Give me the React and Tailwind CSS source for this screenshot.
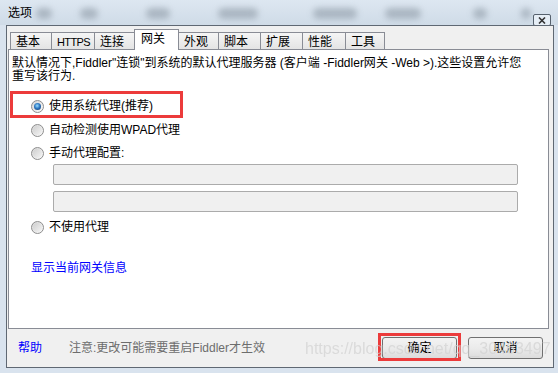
import React from 'react';

const font = { fontFamily: '"Liberation Sans", "Noto Sans CJK SC", sans-serif' };

const tabs = [
  { label: '基本', w: 'w-[42px]' },
  { label: 'HTTPS', w: 'w-[44px] tracking-[-0.6px] text-[11px]' },
  { label: '连接', w: 'w-[41px]' },
  { label: '网关', w: 'w-[45px]', active: true },
  { label: '外观', w: 'w-[41px]' },
  { label: '脚本', w: 'w-[43px]' },
  { label: '扩展', w: 'w-[43px]' },
  { label: '性能', w: 'w-[44px]' },
  { label: '工具', w: 'w-[40px]' },
];

const blobs = [
  'left-[36px] w-[16px]',
  'left-[80px] w-[18px]',
  'left-[146px] w-[24px]',
  'left-[218px] w-[40px]',
  'left-[313px] w-[44px]',
  'left-[385px] w-[36px]',
  'left-[473px] w-[14px]',
  'left-[521px] w-[10px]',
];

const Radio = ({ checked }) => (
  <span className="w-[13px] h-[13px] rounded-full border border-[#8d8d8d] bg-gradient-to-br from-[#d6d6d6] to-[#fbfbfb] flex items-center justify-center shrink-0">
    {checked ? (
      <span className="w-[7px] h-[7px] rounded-full bg-[radial-gradient(circle_at_45%_40%,#9be0ff_0%,#2f79c4_45%,#0f2f5a_100%)]" />
    ) : (
      <span className="w-[9px] h-[9px] rounded-full bg-gradient-to-br from-[#cfcfcf] to-[#f4f4f4]" />
    )}
  </span>
);

const WinButton = ({ children }) => (
  <button className="w-[75px] h-[22px] rounded-[3px] border border-[#707070] bg-gradient-to-b from-[#f3f3f3] via-[#ebebeb] to-[#dcdcdc] text-[12px] text-black flex items-center justify-center">
    {children}
  </button>
);

export default function App() {
  return (
    <div style={font} className="w-[558px] h-[373px] bg-[#d9e3ee] flex flex-col overflow-hidden text-[12px] text-black">
      {/* title bar */}
      <div className="relative h-[25px] shrink-0 bg-gradient-to-b from-[#dde7f1] to-[#cfdbe7]">
        {blobs.map((b, i) => (
          <span key={i} className={`absolute top-[8px] h-[11px] rounded-full bg-[#8e9aa6] opacity-60 blur-[3px] ${b}`} />
        ))}
        <span className="absolute left-[8px] top-[5px] leading-[16px] text-[12px]">选项</span>
        <span className="absolute left-[533px] top-[14px] w-[18px] h-[12px] rounded-[2px] border border-[#56616d] bg-[#e6eef6] flex items-center justify-center">
          <svg width="8" height="7" viewBox="0 0 8 7">
            <path d="M1 0.5 L7 6.5 M7 0.5 L1 6.5" stroke="#333" strokeWidth="1.6" />
          </svg>
        </span>
      </div>

      {/* client area */}
      <div className="ml-[6px] mr-[4px] mb-[5px] flex-1 flex flex-col border border-[#5f6873] bg-[#f0f0f0] relative">
        {/* tab strip */}
        <div className="h-[22px] flex items-end pl-[3px] mt-[1px]">
          {tabs.map((t) =>
            t.active ? (
              <div
                key={t.label}
                className={`${t.w} h-[21px] -mb-px relative z-10 bg-white border border-b-0 border-[#898c95] pl-[6px] pt-[2px] leading-[14px] -ml-px`}
              >
                {t.label}
              </div>
            ) : (
              <div
                key={t.label}
                className={`${t.w} h-[17px] whitespace-nowrap overflow-hidden bg-gradient-to-b from-[#f5f5f5] to-[#e4e4e4] border border-b-0 border-[#898c95] pl-[5px] pt-[2px] leading-[14px] -ml-px first:ml-0`}
              >
                {t.label}
              </div>
            )
          )}
        </div>

        {/* panel */}
        <div className="ml-px mr-[4px] h-[280px] bg-white border border-[#898c95] flex flex-col relative">
          <div className="pl-[3px] pt-[7px] leading-[13px] whitespace-nowrap">
            默认情况下,Fiddler&quot;连锁&quot;到系统的默认代理服务器 (客户端 -Fiddler网关 -Web &gt;).这些设置允许您
            <br />
            重写该行为.
          </div>

          <div className="relative mt-[12px] h-[22px] flex items-center pl-[22px]">
            <Radio checked />
            <span className="ml-[5px]">使用系统代理(推荐)</span>
            <span className="absolute left-[1px] top-[-4px] w-[173px] h-[27px] border-[3px] border-[#ec3b3b]" />
          </div>

          <div className="mt-[2px] h-[22px] flex items-center pl-[22px]">
            <Radio />
            <span className="ml-[5px]">自动检测使用WPAD代理</span>
          </div>

          <div className="mt-[1px] h-[22px] flex items-center pl-[22px]">
            <Radio />
            <span className="ml-[5px]">手动代理配置:</span>
          </div>

          <div className="ml-[44px] w-[465px] flex flex-col gap-[6px]">
            <div className="h-[21px] rounded-[2px] border border-[#ababab] bg-[#f0f0f0]" />
            <div className="h-[21px] rounded-[2px] border border-[#ababab] bg-[#f0f0f0]" />
          </div>

          <div className="mt-[4px] h-[22px] flex items-center pl-[22px]">
            <Radio />
            <span className="ml-[5px]">不使用代理</span>
          </div>

          <div className="mt-[22px] pl-[22px] leading-[16px] text-[#0000ff]">显示当前网关信息</div>
        </div>

        {/* footer */}
        <div className="flex-1 flex items-center relative">
          <span className="ml-[11px] text-[#0000ff]">帮助</span>
          <span className="ml-[27px] text-[#6d6d6d]">注意:更改可能需要重启Fiddler才生效</span>
          <div className="ml-auto mr-[10px] flex gap-[11px]">
            <div className="relative">
              <WinButton>确定</WinButton>
              <span className="absolute -left-[4px] -top-[4px] w-[83px] h-[28px] border-[3px] border-[#ec3b3b]" />
            </div>
            <WinButton>取消</WinButton>
          </div>
          <span className="absolute left-[298px] top-[10px] text-[16px] leading-[20px] text-[#d2d2d2] opacity-70 whitespace-nowrap pointer-events-none">
            https://blog.csdn.net/qq_30463497
          </span>
        </div>
      </div>
    </div>
  );
}
